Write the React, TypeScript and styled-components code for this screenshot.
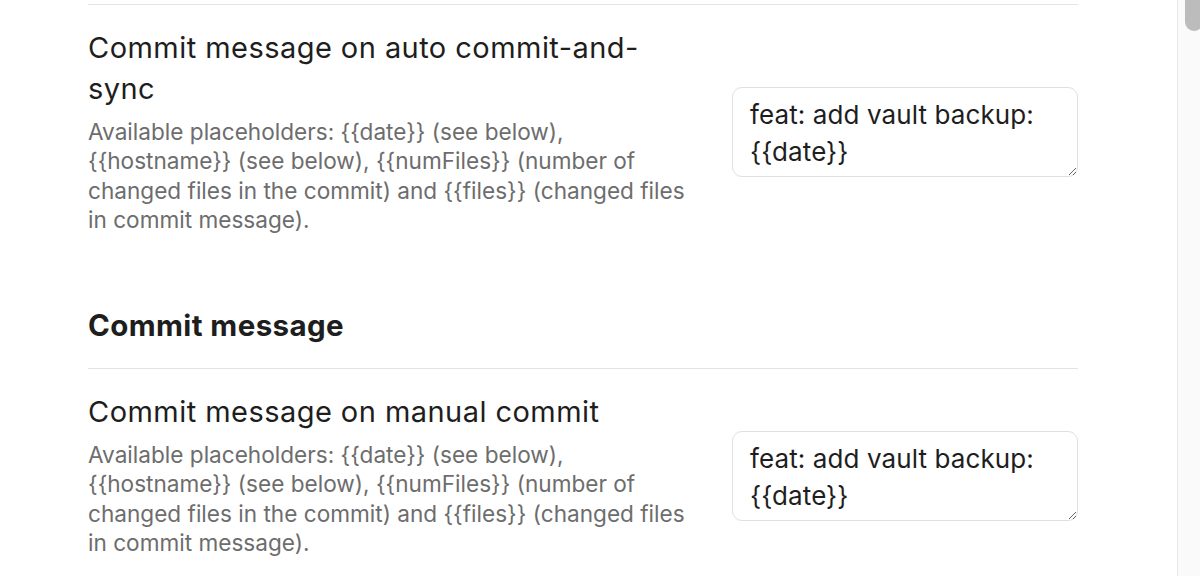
import styled, { createGlobalStyle } from 'styled-components';

const GlobalStyle = createGlobalStyle`
  html, body {
    margin: 0;
    padding: 0;
    background: #ffffff;
    overflow: hidden;
  }
  body {
    font-family: Inter, "Noto Sans", "Liberation Sans", sans-serif;
    color: #222222;
  }
`;

interface SettingDef {
  name: string[];
  desc: string[];
  value: string;
}

const descLines = [
  'Available placeholders: {{date}} (see below),',
  '{{hostname}} (see below), {{numFiles}} (number of',
  'changed files in the commit) and {{files}} (changed files',
  'in commit message).',
];

const autoSetting: SettingDef = {
  name: ['Commit message on auto commit-and-', 'sync'],
  desc: descLines,
  value: 'feat: add vault backup: {{date}}',
};

const manualSetting: SettingDef = {
  name: ['Commit message on manual commit'],
  desc: descLines,
  value: 'feat: add vault backup: {{date}}',
};

const Window = styled.div`
  display: flex;
  width: 1200px;
  height: 576px;
  overflow: hidden;
`;

const Content = styled.div`
  flex: 1;
  padding: 4px 99px 0 88px;
  overflow: hidden;
`;

const Scrollbar = styled.div`
  width: 22px;
  height: 576px;
  background: #fafafa;
  border-left: 1px solid #e8e8e8;
  position: relative;
`;

const Thumb = styled.div`
  position: absolute;
  top: -20px;
  left: 7px;
  width: 18px;
  height: 51px;
  border-radius: 9px;
  background: #bcbcbc;
`;

const SettingItem = styled.div`
  display: flex;
  align-items: center;
  justify-content: space-between;
  border-top: 1px solid #e3e3e3;
  padding: 22px 0 22px;
`;

const Info = styled.div`
  flex: 1 1 auto;
  margin-right: 24px;
`;

const Line = styled.span`
  display: block;
  white-space: nowrap;
`;

const Name = styled.div`
  font-size: 29px;
  letter-spacing: 0.45px;
  line-height: 41px;
  color: #1e1e1e;
`;

const Description = styled.div`
  margin-top: 8px;
  font-size: 22.6px;
  line-height: 29.3px;
  color: #6d6d6d;
`;

const Control = styled.div`
  display: flex;
  justify-content: flex-end;
  flex: 0 0 auto;
  margin-top: 3px;
`;

const TextArea = styled.textarea`
  box-sizing: border-box;
  width: 346px;
  height: 90px;
  padding: 8px 17px;
  border: 1px solid #e0e0e0;
  border-radius: 10px;
  background: #ffffff;
  font-family: Inter, "Noto Sans", "Liberation Sans", sans-serif;
  font-size: 26px;
  letter-spacing: 0.1px;
  line-height: 37px;
  color: #1e1e1e;
  resize: vertical;
  outline: none;
  overflow: hidden;
`;

const Heading = styled.div`
  padding: 49px 0 23px;
  font-size: 29.5px;
  letter-spacing: 0.4px;
  line-height: 40px;
  font-weight: 700;
  color: #1e1e1e;
`;

function Setting({ setting }: { setting: SettingDef }) {
  return (
    <SettingItem>
      <Info>
        <Name>
          {setting.name.map((l) => (
            <Line key={l}>{l}</Line>
          ))}
        </Name>
        <Description>
          {setting.desc.map((l) => (
            <Line key={l}>{l}</Line>
          ))}
        </Description>
      </Info>
      <Control>
        <TextArea defaultValue={setting.value} spellCheck={false} />
      </Control>
    </SettingItem>
  );
}

export default function App() {
  return (
    <>
      <GlobalStyle />
      <Window>
        <Content>
          <Setting setting={autoSetting} />
          <Heading>Commit message</Heading>
          <Setting setting={manualSetting} />
        </Content>
        <Scrollbar>
          <Thumb />
        </Scrollbar>
      </Window>
    </>
  );
}
